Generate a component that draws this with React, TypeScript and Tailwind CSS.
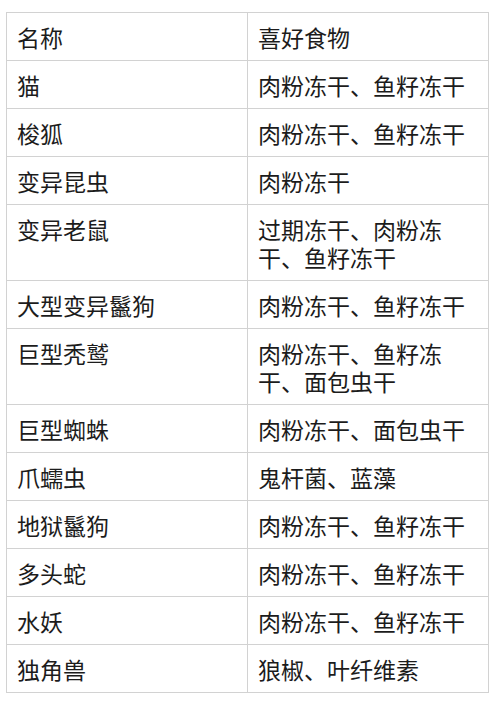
import React from "react";

const rows: [string, string][] = [
  ["猫", "肉粉冻干、鱼籽冻干"],
  ["梭狐", "肉粉冻干、鱼籽冻干"],
  ["变异昆虫", "肉粉冻干"],
  ["变异老鼠", "过期冻干、肉粉冻干、鱼籽冻干"],
  ["大型变异鬣狗", "肉粉冻干、鱼籽冻干"],
  ["巨型秃鹫", "肉粉冻干、鱼籽冻干、面包虫干"],
  ["巨型蜘蛛", "肉粉冻干、面包虫干"],
  ["爪蠕虫", "鬼杆菌、蓝藻"],
  ["地狱鬣狗", "肉粉冻干、鱼籽冻干"],
  ["多头蛇", "肉粉冻干、鱼籽冻干"],
  ["水妖", "肉粉冻干、鱼籽冻干"],
  ["独角兽", "狼椒、叶纤维素"],
];

export default function App() {
  return (
    <div
      className="w-[500px] h-[701px] bg-white pt-[12px] pl-[6px] text-[#1c1c1c]"
      style={{ fontFamily: '"Noto Sans CJK SC", "Noto Sans", sans-serif' }}
    >
      <table className="w-[483px] table-fixed border-collapse border border-[#d2d2d2] text-[23px] leading-[28px]">
        <tbody>
          <tr>
            <td className="border border-[#d2d2d2] py-[9.5px] pl-[10px] pr-[8px] align-top">名称</td>
            <td className="border border-[#d2d2d2] py-[9.5px] pl-[10px] pr-[8px] align-top">喜好食物</td>
          </tr>
          {rows.map(([a, b]) => (
            <tr key={a}>
              <td className="border border-[#d2d2d2] py-[9.5px] pl-[10px] pr-[8px] align-top">{a}</td>
              <td className="border border-[#d2d2d2] py-[9.5px] pl-[10px] pr-[8px] align-top">{b}</td>
            </tr>
          ))}
        </tbody>
      </table>
    </div>
  );
}
